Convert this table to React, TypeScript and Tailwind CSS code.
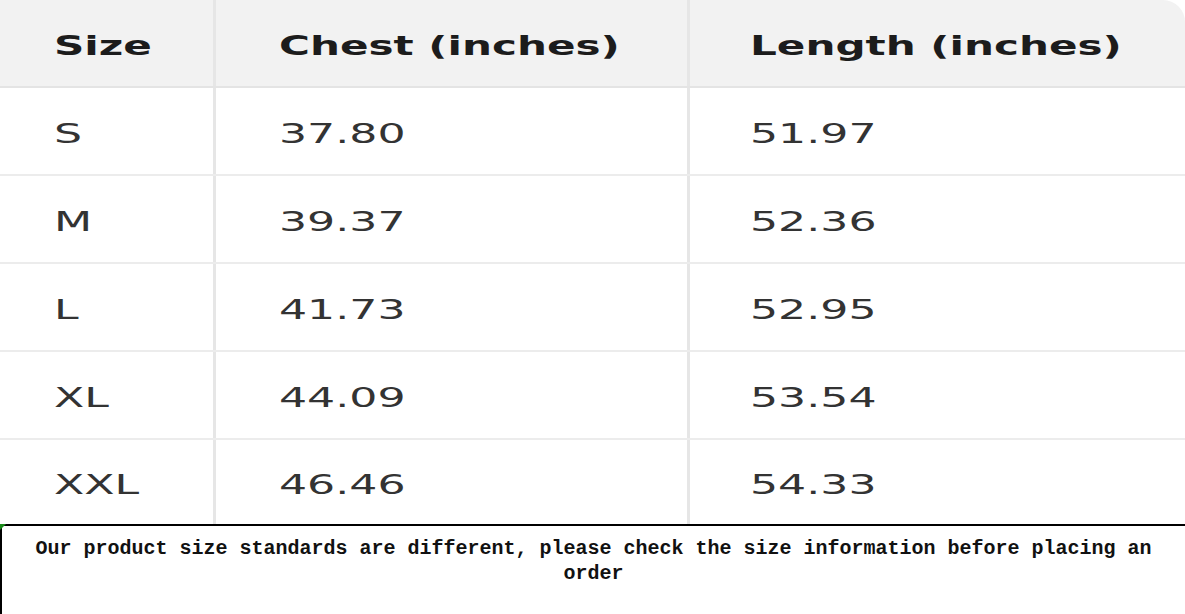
const rows = [
  ["S", "37.80", "51.97"],
  ["M", "39.37", "52.36"],
  ["L", "41.73", "52.95"],
  ["XL", "44.09", "53.54"],
  ["XXL", "46.46", "54.33"],
];

function Cell({ text, head, first, pad }: { text: string; head?: boolean; first?: boolean; pad: string }) {
  return (
    <div className={`flex items-center pt-[6px] ${pad} ${first ? "" : "border-l-[3px] border-[#e6e6e6]"}`}>
      <span
        className={`inline-block origin-left whitespace-nowrap ${
          head ? "scale-x-[1.62] font-bold text-[#1c1c1c]" : "scale-x-[1.7] text-[#333333]"
        } text-[26px] leading-none`}
      >
        {text}
      </span>
    </div>
  );
}

export default function App() {
  const pads = ["pl-[54px]", "pl-[63px]", "pl-[60px]"];
  return (
    <div className="w-[1185px] h-[614px] bg-white overflow-hidden flex flex-col" style={{ fontFamily: '"DejaVu Sans", Verdana, sans-serif' }}>
      {/* Size table */}
      <div className="rounded-tr-[22px] overflow-hidden">
        <div className="grid grid-cols-[213px_474px_1fr] h-[88px] bg-[#f2f2f2] border-b-2 border-[#e4e4e4]">
          {["Size", "Chest (inches)", "Length (inches)"].map((t, i) => (
            <Cell key={t} text={t} head first={i === 0} pad={pads[i]} />
          ))}
        </div>
        {rows.map((r, ri) => (
          <div
            key={r[0]}
            className={`grid grid-cols-[213px_474px_1fr] ${
              ri === rows.length - 1 ? "h-[84px]" : "h-[88px] border-b-2 border-[#ececec]"
            }`}
          >
            {r.map((t, i) => (
              <Cell key={i} text={t} first={i === 0} pad={pads[i]} />
            ))}
          </div>
        ))}
      </div>

      {/* Note */}
      <div className="relative flex-1 border-t-2 border-l-2 border-black pt-[10px] px-[2px]">
        <div className="absolute -top-[2px] -left-[2px] w-0 h-0 border-t-[6px] border-r-[6px] border-t-[#1a8a1a] border-r-transparent" />
        <p
          className="text-center text-[20px] leading-[25px] text-[#111111] font-bold"
          style={{ fontFamily: '"Liberation Mono", "Courier New", monospace' }}
        >
          Our product size standards are different, please check the size information before placing an order
        </p>
      </div>
    </div>
  );
}
